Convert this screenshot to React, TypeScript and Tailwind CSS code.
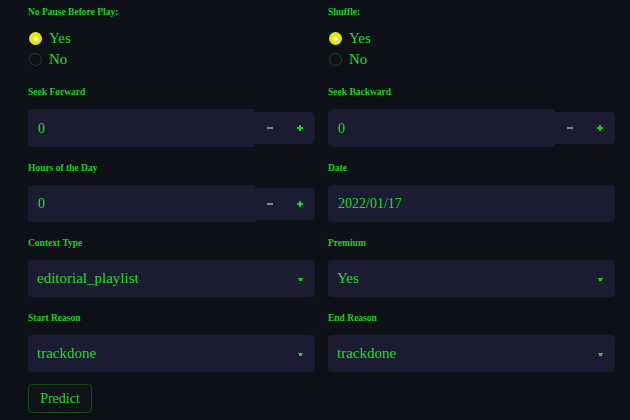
import React from 'react';

const FONT = "font-['Liberation_Serif','DejaVu_Serif',serif]";

function Label({ children }: { children: React.ReactNode }) {
  return (
    <div className="flex h-[16px] items-center text-[9.5px] font-bold leading-none text-[#22cf22]">
      {children}
    </div>
  );
}

function RadioGroup({ label }: { label: string }) {
  return (
    <div className="pb-[1px]">
      <Label>{label}</Label>
      <div className="mt-[7px] flex flex-col">
        <div className="flex h-[21px] items-center gap-[7px] pl-[1px]">
          <span className="flex h-[13px] w-[13px] items-center justify-center rounded-full bg-[#e6e613]">
            <span className="h-[4px] w-[4px] rounded-full bg-white" />
          </span>
          <span className="text-[15px] leading-none text-[#2ad92a]">Yes</span>
        </div>
        <div className="flex h-[21px] items-center gap-[7px] pl-[1px]">
          <span className="h-[13px] w-[13px] rounded-full border-[1.5px] border-[#1c4a1c]" />
          <span className="text-[15px] leading-none text-[#2ad92a]">No</span>
        </div>
      </div>
    </div>
  );
}

function NumberField({ label, value, tall }: { label: string; value: string; tall?: boolean }) {
  return (
    <div>
      <Label>{label}</Label>
      <div className="mt-[8px] flex items-center">
        <div
          className={`flex flex-1 items-center rounded-l-[4px] bg-[#1b1b32] pl-[10px] text-[14px] text-[#2ad92a] ${
            tall ? 'h-[38px]' : 'h-[37px]'
          }`}
        >
          {value}
        </div>
        <div className="flex h-[32px] w-[60px] items-center rounded-r-[4px] bg-[#1b1b32]">
          <span className="ml-[12px] h-[2px] w-[6px] bg-[#7d7f92]" />
          <span className="relative ml-[24px] h-[6px] w-[6px]">
            <span className="absolute left-0 top-[2px] h-[2px] w-[6px] bg-[#24d024]" />
            <span className="absolute left-[2px] top-0 h-[6px] w-[2px] bg-[#24d024]" />
          </span>
        </div>
      </div>
    </div>
  );
}

function TextField({ label, value }: { label: string; value: string }) {
  return (
    <div>
      <Label>{label}</Label>
      <div className="mt-[8px] flex h-[37px] items-center rounded-[4px] bg-[#1b1b32] pl-[10px] text-[14px] text-[#2ad92a]">
        {value}
      </div>
    </div>
  );
}

function SelectField({ label, value }: { label: string; value: string }) {
  return (
    <div>
      <Label>{label}</Label>
      <div className="mt-[8px] flex h-[37px] items-center justify-between rounded-[4px] bg-[#1b1b32] pl-[9px] pr-[12px] text-[15px] text-[#2ad92a]">
        <span>{value}</span>
        <svg width="5" height="3" viewBox="0 0 5 3" className="mt-[1px]">
          <rect x="0" y="0" width="5" height="1" fill="#24d024" />
          <rect x="1" y="1" width="3" height="2" fill="#24d024" />
        </svg>
      </div>
    </div>
  );
}

export default function App() {
  return (
    <div className={`min-h-[420px] w-[630px] bg-[#0e1117] pl-[28px] pr-[15px] pt-[5px] ${FONT}`}>
      <div className="grid grid-cols-2 gap-x-[13px] gap-y-[14px]">
        <RadioGroup label="No Pause Before Play:" />
        <RadioGroup label="Shuffle:" />
        <NumberField label="Seek Forward" value="0" tall />
        <NumberField label="Seek Backward" value="0" tall />
        <NumberField label="Hours of the Day" value="0" />
        <TextField label="Date" value="2022/01/17" />
        <SelectField label="Context Type" value="editorial_playlist" />
        <SelectField label="Premium" value="Yes" />
        <SelectField label="Start Reason" value="trackdone" />
        <SelectField label="End Reason" value="trackdone" />
      </div>
      <button
        type="button"
        className="mt-[12px] flex h-[29px] w-[64px] items-center justify-center rounded-[4px] border border-[#1c4a1c] bg-[#0f1418] text-[14px] text-[#2ad92a]"
      >
        Predict
      </button>
    </div>
  );
}
